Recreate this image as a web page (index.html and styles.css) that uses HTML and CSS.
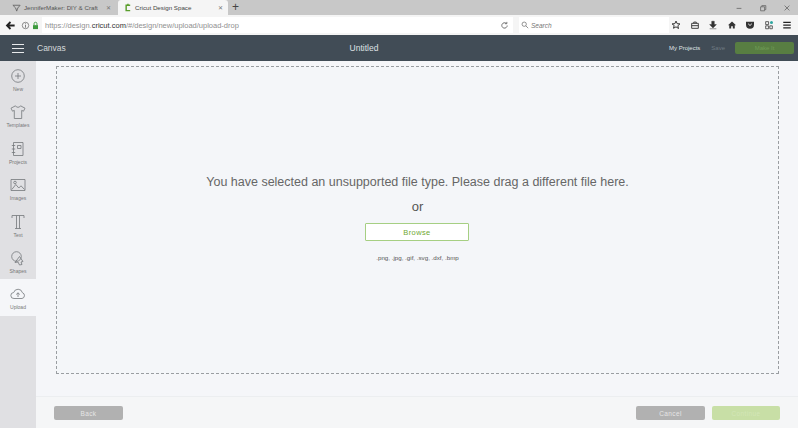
FILE: index.html
```html
<!DOCTYPE html>
<html lang="en">
<head>
<meta charset="utf-8">
<title>Cricut Design Space</title>
<link rel="stylesheet" href="styles.css">
</head>
<body>
<div class="tabstrip">
  <div class="tab">
    <svg class="tab-icon" viewBox="0 0 10 10"><path d="M1 2.500h8L6.500 5.500 5.200 9 4 5.500z" fill="none" stroke="#666" stroke-width="1"/></svg>
    <span class="tab-title">JenniferMaker: DIY &amp; Craft</span>
    <span class="tab-close">✕</span>
  </div>
  <div class="tab tab-active">
    <svg class="tab-icon" viewBox="0 0 10 10"><path d="M8 2.500H3.500v6H8M5.500 0.800v2" fill="none" stroke="#5a9e2c" stroke-width="1.600"/></svg>
    <span class="tab-title">Cricut Design Space</span>
    <span class="tab-close">✕</span>
  </div>
  <span class="tab-new">+</span>
  <div class="window-controls">
    <svg viewBox="0 0 10 10"><path d="M2 5.500h6" stroke="#666" stroke-width="1"/></svg>
    <svg viewBox="0 0 10 10"><path d="M2 3.500h5v5H2zM3.500 3.500V2h5v5H7" fill="none" stroke="#666" stroke-width="1"/></svg>
    <svg viewBox="0 0 10 10"><path d="M2 2l6 6M8 2l-6 6" stroke="#666" stroke-width="1"/></svg>
  </div>
</div>
<div class="toolbar">
  <svg class="nav-back" viewBox="0 0 12 12"><path d="M10.500 6H3M6 2.200 2.200 6 6 9.800" fill="none" stroke="#222" stroke-width="2"/></svg>
  <svg class="site-icon" viewBox="0 0 10 10"><circle cx="5" cy="5" r="3.600" fill="none" stroke="#666" stroke-width=".8"/><path d="M5 4.400v3M5 2.600v1" stroke="#666" stroke-width=".9"/></svg>
  <svg class="site-icon" viewBox="0 0 10 10"><path d="M2.200 4.600h5.600V9H2.200z" fill="#3c9a3c"/><path d="M3.400 4.600V3a1.600 1.600 0 0 1 3.200 0v1.600" fill="none" stroke="#3c9a3c" stroke-width="1"/></svg>
  <div class="urlbar">
    <span class="url">https://design.<b class="url-domain">cricut.com</b>/#/design/new/upload/upload-drop</span>
    <svg class="reload" viewBox="0 0 10 10"><path d="M8 5a3 3 0 1 1-1-2.300M7.600 1v2H5.600" fill="none" stroke="#666" stroke-width="1"/></svg>
  </div>
  <div class="searchbar">
    <svg class="search-icon" viewBox="0 0 10 10"><circle cx="4" cy="4" r="2.700" fill="none" stroke="#777" stroke-width="1"/><path d="M6 6l3 3" stroke="#777" stroke-width="1"/></svg>
    <span>Search</span>
  </div>
  <div class="tools">
    <svg viewBox="0 0 12 12"><path d="M6 1.300l1.400 3.100 3.300.3-2.500 2.200.8 3.300L6 8.200 3 9.900l.8-3.300L1.300 4.700l3.300-.3z" fill="none" stroke="#222" stroke-width="1.100"/></svg>
    <svg viewBox="0 0 12 12"><path d="M2 4h8v6H2zM4.500 4V2.500h3V4M2 6.800h8" fill="none" stroke="#333" stroke-width="1.100"/></svg>
    <svg viewBox="0 0 12 12"><path d="M4.500 1.500h3v4h2.500L6 9.500 2 5.500h2.500zM2 10.500h8" fill="#333" stroke="#333" stroke-width=".6"/></svg>
    <svg viewBox="0 0 12 12"><path d="M6 1.800 1.200 6.200h1.500v4h2.300V7.500h2v2.700h2.300v-4h1.500z" fill="#333"/></svg>
    <svg viewBox="0 0 12 12"><path d="M1.200 2.200h9.600v3.500a4.800 4.800 0 0 1-9.600 0z" fill="#333"/><path d="M3.800 4.500 6 6.600l2.200-2.100" fill="none" stroke="#fff" stroke-width="1.100"/></svg>
    <svg viewBox="0 0 12 12"><path d="M2 2h3.500v3.500H2zM2 7h3.500v3.500H2zM7 7h3v3.500H7z" fill="none" stroke="#444" stroke-width="1"/><circle cx="9" cy="3" r="1.800" fill="#2fa7a0"/></svg>
    <svg viewBox="0 0 12 12"><path d="M1.500 2.700h9M1.500 6h9M1.500 9.300h9" stroke="#222" stroke-width="1.500"/></svg>
  </div>
</div>
<header class="appbar">
  <div class="appbar-left">
    <svg class="hamburger" viewBox="0 0 12 9"><path d="M0 .5h12M0 4.500h12M0 8.500h12" stroke="#e8eaec" stroke-width="1"/></svg>
    <span class="appbar-canvas">Canvas</span>
  </div>
  <div class="appbar-title">Untitled</div>
  <div class="appbar-right">
    <span class="my-projects">My Projects</span>
    <span class="save">Save</span>
    <span class="make-it">Make It</span>
  </div>
</header>
<div class="main">
  <nav class="sidebar">
    <div class="nav-item">
      <svg viewBox="0 0 16 16"><circle cx="8" cy="8" r="6.300"/><path d="M8 5v6M5 8h6"/></svg>
      <span>New</span>
    </div>
    <div class="nav-item">
      <svg viewBox="0 0 16 16"><path d="M5.500 1.800 1 4.200l1.500 3 1.800-.8V14.500h7.400V6.400l1.800.8 1.500-3-4.500-2.400c-.5 2-4.500 2-5 0z"/></svg>
      <span>Templates</span>
    </div>
    <div class="nav-item">
      <svg viewBox="0 0 16 16"><path d="M3.500 1.500h9.500v13H3.500zM1.800 4.500h3.400M1.800 8h3.400M1.800 11.500h3.400M7.500 4.500h3.500v3H7.500z"/></svg>
      <span>Projects</span>
    </div>
    <div class="nav-item">
      <svg viewBox="0 0 16 16"><path d="M1 2.500h14v11H1zM1.800 12.500l4-5 3 3.500 2.200-2.200 3.500 3.700"/><circle cx="5" cy="5.500" r="1.300"/></svg>
      <span>Images</span>
    </div>
    <div class="nav-item">
      <svg viewBox="0 0 16 16"><path d="M2 4V1.500h12V4M6.500 1.500v13M9.500 1.500v13M5 14.500h6"/></svg>
      <span>Text</span>
    </div>
    <div class="nav-item">
      <svg viewBox="0 0 16 16"><circle cx="6.500" cy="6.500" r="4.800"/><path d="M9.500 6.500l3.500 5-2 .5 1 2.500-2.500.5-1.500-3-3 .5z"/></svg>
      <span>Shapes</span>
    </div>
    <div class="nav-item nav-item-active">
      <svg viewBox="0 0 16 16"><path d="M4 12.500a3 3 0 0 1-.3-6 4.500 4.500 0 0 1 8.700.2 3 3 0 0 1-.4 5.800zM8 11V6.800M6.200 8.500 8 6.800l1.800 1.700"/></svg>
      <span>Upload</span>
    </div>
  </nav>
  <div class="workspace">
    <section class="dropzone">
      <p class="dz-message">You have selected an unsupported file type. Please drag a different file here.</p>
      <p class="dz-or">or</p>
      <button class="browse" type="button">Browse</button>
      <p class="dz-formats">.png, .jpg, .gif, .svg, .dxf, .bmp</p>
    </section>
    <footer class="actions">
      <button class="btn btn-gray" type="button">Back</button>
      <div class="actions-right">
        <button class="btn btn-gray" type="button">Cancel</button>
        <button class="btn btn-green" type="button">Continue</button>
      </div>
    </footer>
  </div>
</div>
</body>
</html>
```
FILE: styles.css
```css
* { box-sizing: border-box; }
html, body { margin: 0; padding: 0; }
body {
  width: 798px;
  height: 428px;
  overflow: hidden;
  display: flex;
  flex-direction: column;
  font-family: "Liberation Sans", Arial, sans-serif;
  background: #f5f6f9;
  color: #606060;
}
.tabstrip {
  height: 15px;
  flex: none;
  display: flex;
  align-items: stretch;
  background: #c8c8c8;
  padding-left: 9px;
}
.tab {
  width: 107px;
  display: flex;
  align-items: center;
  gap: 3px;
  padding-left: 3px;
  font-size: 6.200px;
  color: #555;
  position: relative;
}
.tab-active {
  width: 110px;
  margin-left: 2px;
  padding-left: 5px;
  background: #f5f5f5;
  color: #444;
  border-radius: 3px 3px 0 0;
}
.tab-icon { width: 9px; height: 9px; flex: none; }
.tab-title { flex: 1; white-space: nowrap; }
.tab-close { font-size: 6px; color: #777; width: 10px; flex: none; }
.tab-new { font-size: 12px; line-height: 14px; color: #444; margin-left: 4px; }
.window-controls {
  margin-left: auto;
  display: flex;
  gap: 16px;
  align-items: center;
  padding-right: 7px;
}
.window-controls svg { width: 8px; height: 8px; }
.toolbar {
  height: 20px;
  flex: none;
  display: flex;
  align-items: center;
  background: #f5f5f5;
  padding-left: 5px;
}
.nav-back { width: 11px; height: 11px; flex: none; margin-right: 5px; }
.site-icon { width: 9px; height: 9px; flex: none; margin-right: 1px; }
.urlbar {
  width: 471px;
  height: 16px;
  margin-left: 1px;
  display: flex;
  align-items: center;
  justify-content: space-between;
  padding: 0 4px 0 3px;
  background: #fff;
  font-size: 7.500px;
  color: #909090;
  white-space: nowrap;
}
.url-domain { font-weight: normal; color: #333; }
.reload { width: 9px; height: 9px; }
.searchbar {
  width: 150px;
  height: 16px;
  margin-left: 6px;
  display: flex;
  align-items: center;
  gap: 2px;
  padding-left: 2px;
  background: #fff;
  font-size: 6.500px;
  font-style: italic;
  color: #777;
}
.search-icon { width: 8px; height: 8px; }
.tools {
  display: flex;
  align-items: center;
  gap: 8.500px;
  margin-left: 2px;
}
.tools svg { width: 10px; height: 10px; }
.appbar {
  height: 26px;
  flex: none;
  position: relative;
  display: flex;
  align-items: center;
  justify-content: space-between;
  background: #414c56;
  color: #e8eaec;
  padding: 0 4px 0 12px;
}
.appbar-left { display: flex; align-items: center; gap: 13px; }
.hamburger { width: 12px; height: 9px; }
.appbar-canvas { font-size: 8.500px; color: #d5d9dc; }
.appbar-title {
  position: absolute;
  left: 0;
  right: 0;
  text-align: center;
  font-size: 8.500px;
  color: #dfe2e4;
  pointer-events: none;
  padding-right: 70px;
}
.appbar-right { display: flex; align-items: center; font-size: 6px; }
.my-projects { color: #dfe2e4; }
.save { color: #6f7a83; margin-left: 11px; }
.make-it {
  width: 59px;
  height: 12px;
  margin-left: 10px;
  line-height: 12px;
  text-align: center;
  background: #587e42;
  color: #6f9a55;
  border-radius: 2px;
}
.main { flex: 1; min-height: 0; display: flex; }
.sidebar {
  width: 36px;
  flex: none;
  background: #e0e0e3;
}
.nav-item {
  height: 36.400px;
  display: flex;
  flex-direction: column;
  align-items: center;
  padding-top: 7px;
  font-size: 5px;
  color: #777;
}
.nav-item svg {
  width: 16px;
  height: 16px;
  fill: none;
  stroke: #73777b;
  stroke-width: .8;
  margin-bottom: 2px;
}
.nav-item-active { background: #f5f6f9; }
.workspace { flex: 1; min-width: 0; display: flex; flex-direction: column; }
.dropzone {
  height: 308px;
  margin: 5px 19px 0 20px;
  display: flex;
  flex-direction: column;
  align-items: center;
  border: 1px dashed #9a9ea2;
  background: #f4f6f9;
}
.dz-message { margin: 108px 0 0; font-size: 12.500px; line-height: 15px; color: #666; }
.dz-or { margin: 9px 0 0; font-size: 13px; line-height: 15px; color: #555; }
.browse {
  width: 104px;
  height: 18px;
  margin: 9px 1px 0 0;
  padding: 0;
  background: #fff;
  border: 1px solid #a6cf83;
  border-radius: 1px;
  font: 7.500px "Liberation Sans", Arial, sans-serif;
  letter-spacing: .4px;
  color: #6fa832;
}
.dz-formats { margin: 13px 0 0; font-size: 6.200px; line-height: 7px; color: #555; }
.actions {
  flex: 1;
  margin-top: 22px;
  display: flex;
  justify-content: space-between;
  align-items: flex-start;
  padding: 9px 18px 0 18px;
  border-top: 1px solid #eceef0;
  background: #f5f6f7;
}
.actions-right { display: flex; gap: 7px; }
.btn {
  width: 69px;
  height: 14px;
  padding: 0;
  border: 0;
  border-radius: 2px;
  font: 6.500px "Liberation Sans", Arial, sans-serif;
  letter-spacing: .4px;
}
.btn-gray { background: #b1b1b1; color: #e6e6e6; }
.btn-green { width: 68px; background: #c8dfa6; color: #d3e6b8; }
```
